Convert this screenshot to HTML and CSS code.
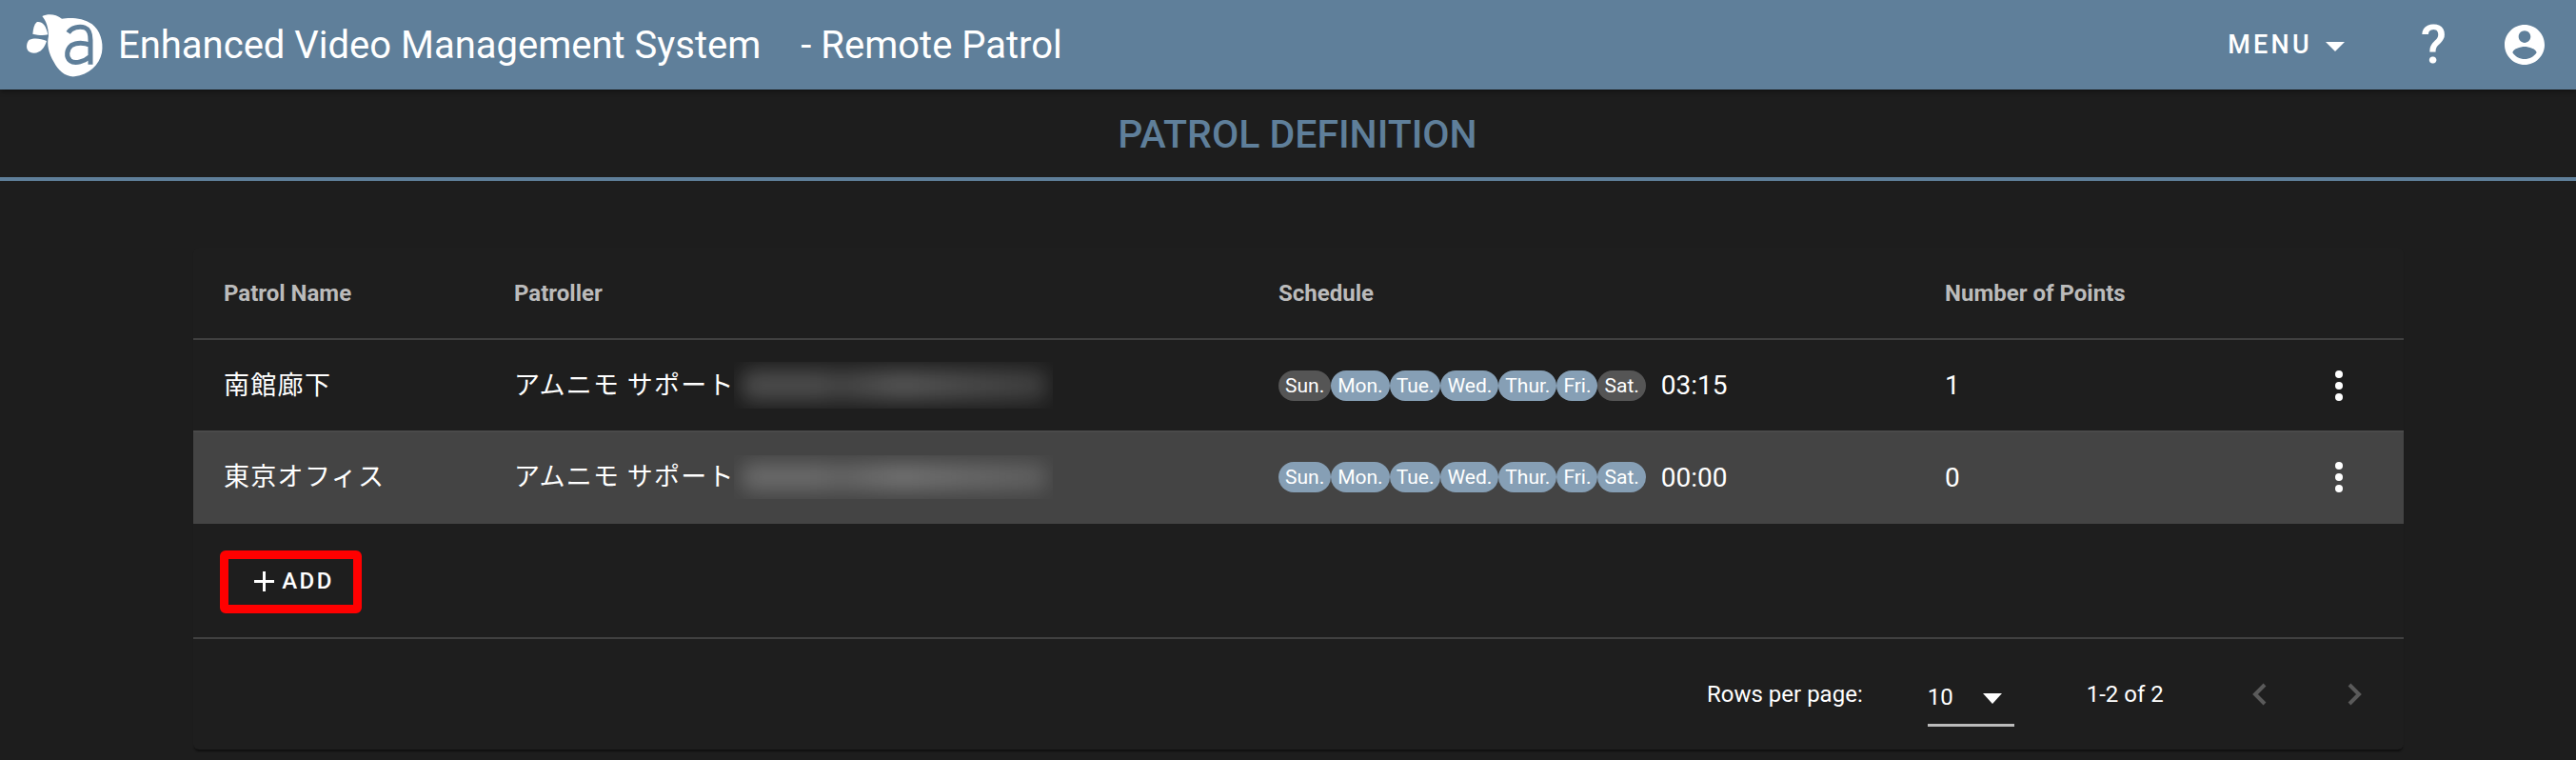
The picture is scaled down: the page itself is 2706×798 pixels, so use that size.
FILE: index.html
```html
<!DOCTYPE html>
<html lang="ja">
<head>
<meta charset="utf-8">
<title>Patrol Definition</title>
<link rel="stylesheet" href="styles.css">
</head>
<body>
<header class="appbar">
  <svg class="logo" viewBox="0 0 330 240" aria-hidden="true">
    <path class="logo-fill" d="M88 30C105 22 130 22 150 38C175 34 215 34 245 55C270 75 282 110 276 145C268 185 235 215 190 220C160 222 138 200 125 175C108 145 102 120 108 92C108 65 100 45 88 30Z"/>
    <path class="logo-fill" d="M72 48C88 46 100 58 106 88C92 92 74 90 58 86C60 70 62 56 72 48Z"/>
    <path class="logo-fill" d="M48 104C62 98 84 100 102 108C96 128 84 146 62 146C46 146 36 136 40 118C41 112 44 107 48 104Z"/>
    <path class="logo-cut" d="M170 82C180 66 205 60 222 66C238 72 240 90 240 105V182M240 122C222 112 195 112 180 122C165 134 162 158 176 170C192 182 222 172 240 156"/>
  </svg>
  <h1 class="app-title">Enhanced Video Management System</h1>
  <span class="app-sub">- Remote Patrol</span>
  <button class="menu-btn" type="button">MENU<span class="menu-caret"></span></button>
  <span class="help">?</span>
  <svg class="account" viewBox="2 2 20 20" aria-hidden="true">
    <path d="M12 2C6.48 2 2 6.48 2 12s4.48 10 10 10 10-4.48 10-10S17.52 2 12 2zm0 3c1.66 0 3 1.34 3 3s-1.34 3-3 3-3-1.34-3-3 1.34-3 3-3zm0 14.2c-2.5 0-4.71-1.28-6-3.22.03-1.99 4-3.08 6-3.08 1.99 0 5.97 1.09 6 3.08-1.29 1.94-3.5 3.22-6 3.22z"/>
  </svg>
</header>

<div class="band"><h2 class="band-title">PATROL DEFINITION</h2></div>

<main class="card">
  <div class="row head">
    <div>Patrol Name</div>
    <div>Patroller</div>
    <div>Schedule</div>
    <div>Number of Points</div>
    <div></div>
  </div>

  <div class="row">
    <div class="cjk">南館廊下</div>
    <div class="patroller"><span class="cjk">アムニモ サポート</span><span class="blur"><i></i></span></div>
    <div class="schedule">
      <span class="chip off">Sun.</span><span class="chip">Mon.</span><span class="chip">Tue.</span><span class="chip">Wed.</span><span class="chip">Thur.</span><span class="chip">Fri.</span><span class="chip off">Sat.</span>
      <span class="time">03:15</span>
    </div>
    <div>1</div>
    <div class="more"><span></span><span></span><span></span></div>
  </div>

  <div class="row selected">
    <div class="cjk">東京オフィス</div>
    <div class="patroller"><span class="cjk">アムニモ サポート</span><span class="blur short"><i></i></span></div>
    <div class="schedule">
      <span class="chip">Sun.</span><span class="chip">Mon.</span><span class="chip">Tue.</span><span class="chip">Wed.</span><span class="chip">Thur.</span><span class="chip">Fri.</span><span class="chip">Sat.</span>
      <span class="time">00:00</span>
    </div>
    <div>0</div>
    <div class="more"><span></span><span></span><span></span></div>
  </div>

  <div class="add-row">
    <button class="add-btn" type="button">
      <svg class="plus" viewBox="0 0 21 21" aria-hidden="true"><path d="M10.5 0v21M0 10.5h21"/></svg>ADD
    </button>
  </div>

  <footer class="pager">
    <span>Rows per page:</span>
    <span class="select">10<span class="select-caret"></span></span>
    <span class="range">1-2 of 2</span>
    <svg class="chev first" viewBox="0 0 16 24" aria-hidden="true"><path d="M14 2 4 12l10 10"/></svg>
    <svg class="chev last" viewBox="0 0 16 24" aria-hidden="true"><path d="M2 2l10 10L2 22"/></svg>
  </footer>
</main>
</body>
</html>
```
FILE: styles.css
```css
* { box-sizing: border-box; }
html, body { margin: 0; height: 798px; overflow: hidden; }
body {
  background: #1d1d1d;
  color: #fff;
  font-family: Roboto, "Noto Sans CJK JP", sans-serif;
}

.appbar {
  height: 94px;
  background: #5f7f9a;
  display: flex;
  align-items: center;
  padding: 0 33px 0 15px;
  box-shadow: 0 2px 5px rgba(0, 0, 0, .4);
  position: relative;
}
.logo { width: 110px; height: 80px; flex: none; margin-right: -1px; }
.logo-fill { fill: #fff; }
.logo-cut { fill: none; stroke: #5f7f9a; stroke-width: 15; }
.app-title { margin: 0; font-size: 40px; font-weight: 400; white-space: nowrap; }
.app-sub { margin-left: 42px; font-size: 40px; font-weight: 400; white-space: nowrap; }
.menu-btn {
  margin-left: auto;
  background: none;
  border: 0;
  color: #fff;
  padding: 0;
  font: 500 27px Roboto, sans-serif;
  letter-spacing: 3.2px;
  display: flex;
  align-items: center;
}
.menu-caret {
  margin-left: 14px;
  margin-top: 3px;
  border-left: 10px solid transparent;
  border-right: 10px solid transparent;
  border-top: 10px solid #fff;
}
.help { margin-left: 80px; font-size: 56px; font-weight: 500; line-height: 1; }
.account { margin-left: 61px; width: 42px; height: 42px; fill: #fff; }

.band { height: 96px; padding: 2px 0 0 20px; border-bottom: 4px solid #5f7f9a; display: flex; align-items: center; justify-content: center; }
.band-title { margin: 0; font-size: 41px; font-weight: 500; color: #5f7f9a; }

.card {
  margin: 70px 181px 0 203px;
  height: 527px;
  background: #1e1e1e;
  border-radius: 6px;
  box-shadow: 0 3px 2px -1px rgba(0, 0, 0, .5);
}
.row {
  display: grid;
  grid-template-columns: 337px 803px 700px 346px 136px;
  align-items: center;
  height: 95px;
  font-size: 28px;
}
.row > div:first-child { padding-left: 32px; }
.head {
  height: 97px;
  border-bottom: 2px solid #404040;
  font-size: 24px;
  font-weight: 700;
  color: #bbb;
}
.selected { height: 98px; padding-bottom: 2px; background: #444; border-top: 2px solid #4a4a4a; }

.cjk {
  font-family: "Noto Sans CJK JP", sans-serif;
  font-size: 27px;
  font-weight: 400;
  letter-spacing: 1.3px;
  padding-bottom: 5px;
}
.patroller { display: flex; align-items: center; }
.blur { margin-left: -1px; width: 335px; height: 49px; overflow: hidden; display: block; }
.blur i {
  display: block;
  margin: 8px 6px 8px 8px;
  height: 33px;
  background: linear-gradient(90deg, rgba(255, 255, 255, .2) 0 25%, rgba(255, 255, 255, .16) 32%, rgba(255, 255, 255, .24) 52%, rgba(255, 255, 255, .19) 75%, rgba(255, 255, 255, .14) 100%);
  border-radius: 12px;
  filter: blur(10px);
}
.blur.short { height: 46px; }
.blur.short i { height: 30px; }

.schedule { display: flex; align-items: center; }
.chip {
  height: 32px;
  padding: 0 7px;
  border-radius: 16px;
  background: #869fb5;
  font-size: 21px;
  line-height: 32px;
}
.chip.off { background: #555; }
.time { margin-left: 16px; font-size: 28px; }
.more { display: flex; flex-direction: column; align-items: center; gap: 4px; }
.more span { width: 8px; height: 8px; border-radius: 50%; background: #fff; }

.add-row { height: 121px; border-bottom: 2px solid #404040; padding: 28px 0 0 28px; }
.add-btn {
  width: 149px;
  height: 66px;
  border: 9px solid #f00;
  border-radius: 6px;
  background: none;
  color: #fff;
  padding: 0 0 2px 7px;
  font: 500 24px Roboto, sans-serif;
  letter-spacing: 2.4px;
  display: flex;
  align-items: center;
  justify-content: center;
  gap: 8px;
}
.plus { width: 21px; height: 21px; fill: none; stroke: #fff; stroke-width: 3; }

.pager { height: 116px; display: flex; align-items: center; font-size: 24px; padding-left: 1590px; }
.select {
  margin-left: 68px;
  width: 91px;
  height: 62px;
  padding-top: 15px;
  line-height: 32px;
  font-size: 24px;
  border-bottom: 3px solid #bbb;
  position: relative;
  top: 3px;
  display: flex;
  align-items: flex-start;
}
.select-caret {
  margin: 12px 0 0 31px;
  border-left: 10px solid transparent;
  border-right: 10px solid transparent;
  border-top: 11px solid #fff;
}
.range { margin-left: 76px; }
.chev { width: 16px; height: 24px; fill: none; stroke: #5a5a5a; stroke-width: 4; }
.first { margin-left: 92px; }
.last { margin-left: 85px; }
```
